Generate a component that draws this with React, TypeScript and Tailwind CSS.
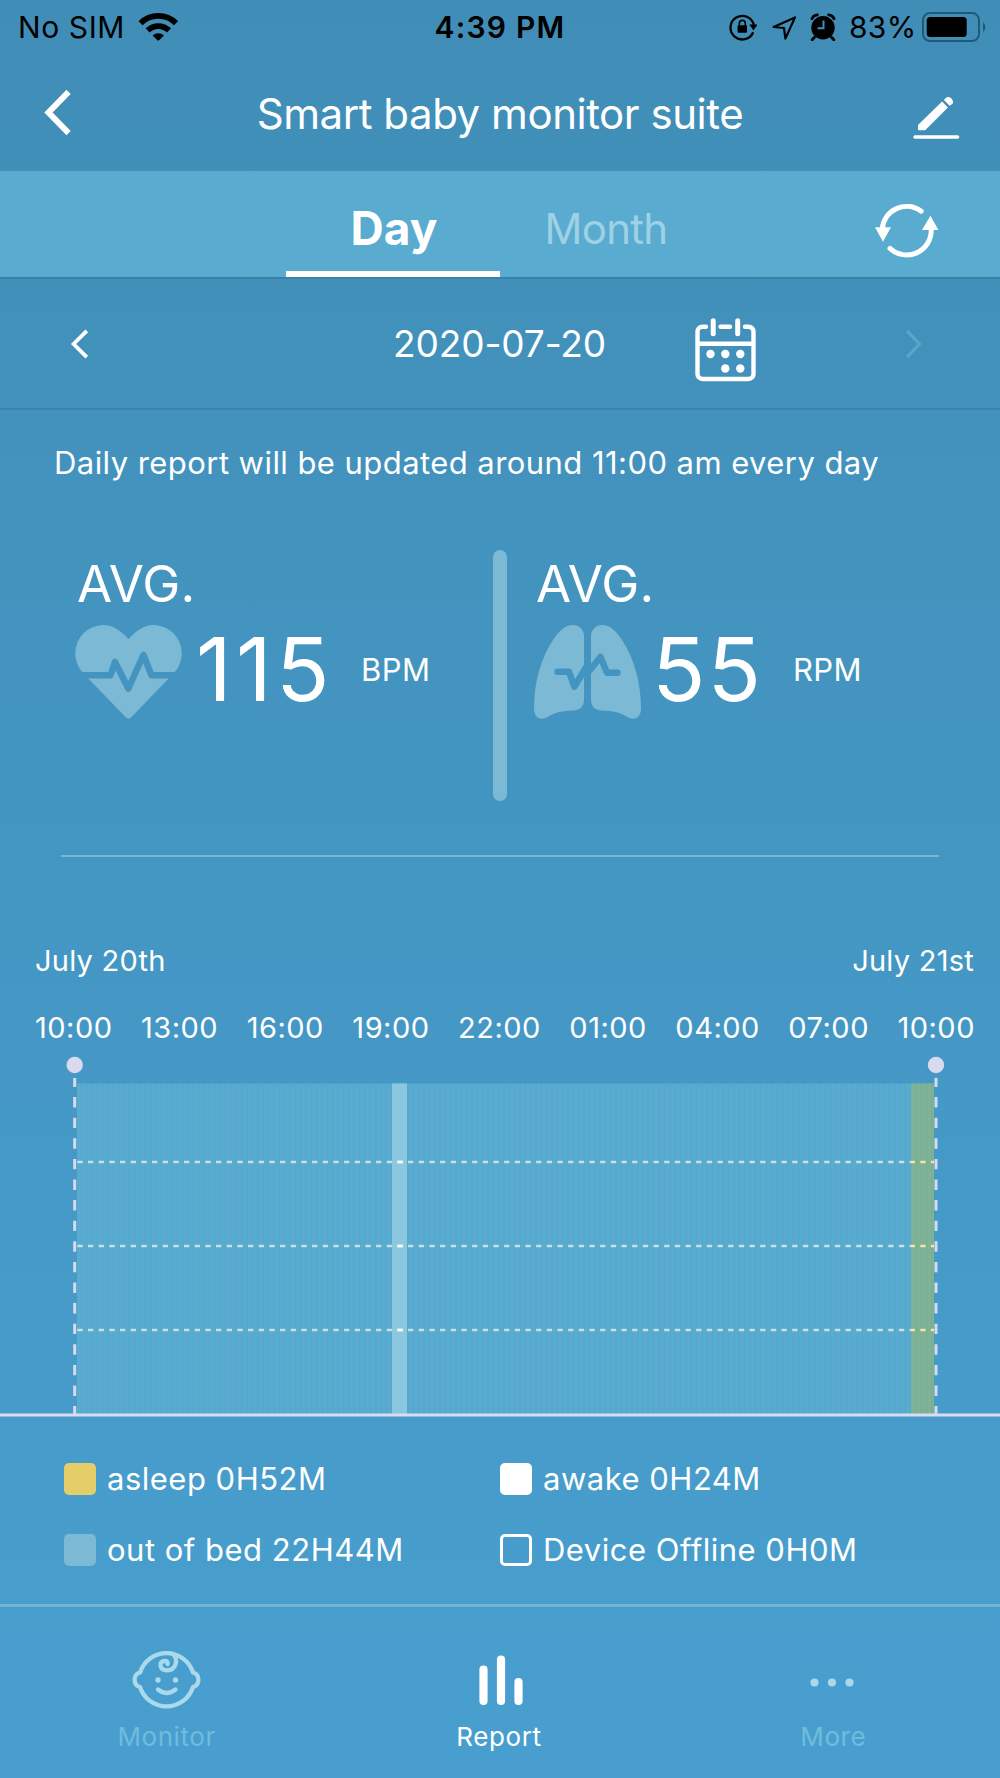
import { ReactNode } from "react";

const hours = ["10:00", "13:00", "16:00", "19:00", "22:00", "01:00", "04:00", "07:00", "10:00"];

function StatusBar() {
  return (
    <div className="relative flex h-[54px] items-center justify-between pr-[14px] pl-[18px] text-[30px] text-black">
      <div className="flex items-center">
        <span className="w-[106px] tracking-[0.6px] whitespace-nowrap">No SIM</span>
        <svg className="ml-[14px]" width="40" height="30" viewBox="0 0 40 30" fill="none" stroke="#000" strokeWidth="5.8">
          <path d="M2.6 11.2a25.2 25.2 0 0 1 35.4 0" />
          <path d="M9.6 18.4a15.4 15.4 0 0 1 21.4 0" />
          <path d="M14.6 23.4a8.4 8.4 0 0 1 11.4 0l-4.6 4.7q-1.1 1-2.2 0z" fill="#000" stroke="none" />
        </svg>
      </div>
      <span className="absolute inset-x-0 text-center font-semibold tracking-[1.2px]">4:39 PM</span>
      <div className="flex items-center">
        <svg width="28" height="28" viewBox="0 0 28 28" fill="none" stroke="#000" strokeWidth="2.3">
          <path d="M24.2 19.2A11.8 11.8 0 1 1 24.8 12" />
          <path d="M20.3 11.5h8.2l-4 6z" fill="#000" stroke="none" />
          <rect x="8.6" y="12.2" width="9.4" height="7.6" rx="1" fill="#000" stroke="none" />
          <path d="M10.3 13v-2.6a3 3 0 0 1 6 0V13" strokeWidth="1.6" />
        </svg>
        <svg className="ml-[14px]" width="26" height="26" viewBox="0 0 26 26" fill="none" stroke="#000" strokeWidth="2.2" strokeLinejoin="round">
          <path d="M2.6 13 24 3.4 14.4 24.6 13 14z" />
        </svg>
        <svg className="ml-[13px]" width="26" height="28" viewBox="0 0 26 28" fill="none">
          <circle cx="13" cy="14.7" r="11.7" fill="#000" />
          <path d="M2 5.6Q3.5 2 7.4 1.8M24 5.6Q22.5 2 18.6 1.8M4.5 24.2l-2.3 2.5M21.5 24.2l2.3 2.5" stroke="#000" strokeWidth="2.8" strokeLinecap="round" />
          <path d="M13.5 7.5v7.8h-6" stroke="#408eb7" strokeWidth="2" />
        </svg>
        <span className="ml-[13px] w-[67px] tracking-[0.3px] whitespace-nowrap">83%</span>
        <svg className="ml-[6px]" width="64" height="32" viewBox="0 0 64 32">
          <rect x="1" y="2" width="56" height="28" rx="7" fill="none" stroke="#215a78" strokeWidth="2" />
          <rect x="4.7" y="6" width="40" height="20" rx="3.5" />
          <path d="M61 11q2.5 2 2.5 5T61 21z" fill="#215a78" />
        </svg>
      </div>
    </div>
  );
}

function TitleBar() {
  return (
    <div className="flex h-[117px] items-center justify-between pr-[39px] pl-[43px]">
      <svg width="50" height="48" viewBox="0 0 50 48" fill="none" stroke="#fff" strokeWidth="6">
        <path d="M25.6 2.9 5.5 23.5l20.1 20.6" />
      </svg>
      <h1 className="mr-[4px] mt-[2px] text-[42px] tracking-[-0.46px] whitespace-nowrap">Smart baby monitor suite</h1>
      <svg className="mt-1" width="50" height="48" viewBox="0 0 50 48" fill="#fff">
        <path d="M7 34 31.1 10.6l5.8 5.8L14.2 39.2H8q-1 0-1-1z" />
        <path d="M32.900 8.900 35.3 6.400A5 5 0 0 1 41.800 12.500L38.7 14.700z" />
        <path d="M4 46h42.6" stroke="#fff" strokeWidth="3.4" strokeLinecap="round" />
      </svg>
    </div>
  );
}

function Tabs() {
  return (
    <div className="flex h-[108px] border-b-2 border-[#3980aa] bg-[#5aabd0]">
      <button className="ml-[286px] w-[214px] border-b-[6px] border-white pt-[14px] pl-[2px] text-[46px] leading-none font-bold">Day</button>
      <button className="w-[214px] pt-[10px] pr-[2px] text-[42px] leading-none tracking-[-0.7px] text-[#9ed1e6]">Month</button>
      <svg className="mt-[32px] ml-[161px]" width="64" height="56" viewBox="0 0 64 56" fill="none" stroke="#fff" strokeWidth="5" strokeLinecap="round">
        <path d="M7.2 26A24.5 24.5 0 0 1 46.2 8.2" />
        <path d="M15 45.4A24.5 24.5 0 0 0 56.2 27" />
        <path d="M0 24.3h16l-8 14.4zM47 27h16.4l-8-14.3z" fill="#fff" stroke="none" />
      </svg>
    </div>
  );
}

function DateBar() {
  return (
    <div className="flex h-[131px] items-center border-b-2 border-[#3a82ab] pr-[76px] pl-[70px]">
      <svg width="20" height="30" viewBox="0 0 20 30" fill="none" stroke="#fff" strokeWidth="3.8">
        <path d="M16.8 1.8 3.6 15l13.2 13.2" />
      </svg>
      <span className="ml-[303px] w-[229px] text-[37px] tracking-[-0.1px] whitespace-nowrap">2020-07-20</span>
      <svg className="mt-3 ml-[72px]" width="62" height="66" viewBox="0 0 62 66" fill="none" stroke="#fff" strokeWidth="4.4" strokeLinecap="round">
        <path d="M12 9.7H8.5a5 5 0 0 0-5 5V57a5 5 0 0 0 5 5h46a5 5 0 0 0 5-5V14.7a5 5 0 0 0-5-5H51M26.5 9.7H36M3.5 26.7h56" />
        <path d="M19.2 3.7v13M43.7 3.7v13" strokeWidth="5" />
        <g fill="#fff" stroke="none">
          <circle cx="16.5" cy="37" r="4.2" />
          <circle cx="31.3" cy="37" r="4.2" />
          <circle cx="46.3" cy="37" r="4.2" />
          <circle cx="31.3" cy="51.5" r="4.2" />
          <circle cx="46.3" cy="51.5" r="4.2" />
        </g>
      </svg>
      <svg className="ml-auto" width="20" height="30" viewBox="0 0 20 30" fill="none" stroke="#55a7cc" strokeWidth="3.2">
        <path d="M3 1.8 15.5 15 3 28.2" />
      </svg>
    </div>
  );
}

function HeartIcon() {
  return (
    <svg className="shrink-0" width="107" height="94" viewBox="0 0 107 94" fill="#7cb9d4">
      <path d="M53.5 14C46 6 38 0 28 0A28.5 28.5 0 0 0 8.5 48.5L51 92.5q2.5 2.3 5 0L98.5 48.5A28.5 28.5 0 0 0 79 0C69 0 61 6 53.5 14z" />
      <path d="M0 50.2h35.5L40 37l13.3 26.5L68.5 30l8 20.2H107" fill="none" stroke="#4394c0" strokeWidth="6.5" strokeLinejoin="round" />
    </svg>
  );
}

function LungsIcon() {
  return (
    <svg className="shrink-0" width="107" height="94" viewBox="0 0 107 94" fill="#7cb9d4">
      <path d="M39 0A11 11 0 0 1 50 11V74Q50 85 39 85.5C28 86 22 87 14.5 91.5C7 96 0 93.5 0 83C0 58 7 33 19 15C25 6 31 0 39 0z" />
      <path d="M68 0A11 11 0 0 0 57 11V74Q57 85 68 85.5C79 86 85 87 92.5 91.5C100 96 107 93.5 107 83C107 58 100 33 88 15C82 6 76 0 68 0z" />
      <path d="M23.5 46.7H35l5.3 15L52 42.5l3.5 3L66.5 32 73 47.7h10.5" fill="none" stroke="#4394c0" strokeWidth="6.5" strokeLinecap="round" strokeLinejoin="round" />
    </svg>
  );
}

interface StatProps {
  icon: ReactNode;
  value: string;
  unit: string;
  valueClass: string;
}

function Stat({ icon, value, unit, valueClass }: StatProps) {
  return (
    <div className="flex w-[418px] flex-col">
      <span className="pl-[2px] text-[51px] leading-[67px] tracking-[0.1px]">AVG.</span>
      <div className="mt-2 flex items-center">
        {icon}
        <span className={`-mt-[6px] text-[88px] leading-none whitespace-nowrap ${valueClass}`}>{value}</span>
        <span className="-mt-[5px] text-[31px] leading-none tracking-[0.4px]">{unit}</span>
      </div>
    </div>
  );
}

function Stats() {
  return (
    <div className="mt-[35px] flex h-[251px] pl-[75px]">
      <Stat icon={<HeartIcon />} value="115" unit="BPM" valueClass="w-[179px] pl-[14px] tracking-[4.2px]" />
      <div className="w-[14px] shrink-0 rounded-full bg-[#7cb9d4]" />
      <div className="w-[27px] shrink-0" />
      <Stat icon={<LungsIcon />} value="55" unit="RPM" valueClass="w-[152px] pl-[11px] tracking-[2px]" />
    </div>
  );
}

function SleepChart() {
  return (
    <svg className="block" width="1000" height="369" viewBox="0 0 1000 369">
      <defs>
        <pattern id="stripes" width="5.35" height="10" patternUnits="userSpaceOnUse">
          <rect width="2.2" height="10" fill="#3e9ac0" fillOpacity="0.12" />
        </pattern>
      </defs>
      <rect x="77" y="35.5" width="857" height="331" fill="#59abd0" />
      <rect x="911" y="35.5" width="23" height="331" fill="#80b393" />
      <rect x="77" y="35.5" width="857" height="331" fill="url(#stripes)" />
      <rect x="392" y="35.5" width="15" height="331" fill="#8bc7e0" />
      {[114, 198, 282].map((y) => (
        <g key={y} fill="none" strokeWidth="2.6" strokeDasharray="5.35 5.32">
          <path d={`M77.3 ${y}H911`} stroke="#c9dfe6" />
          <path d={`M397.4 ${y}h9`} stroke="#fff" />
          <path d={`M911 ${y}H934`} stroke="#f4e2ae" strokeDashoffset="1.4" />
        </g>
      ))}
      <path d="M0 367H1000" stroke="#dcdcf0" strokeWidth="3.2" />
      {[74.7, 936].map((x) => (
        <g key={x}>
          <circle cx={x} cy="17" r="8.2" fill="#dadaee" />
          <path d={`M${x} 30V367`} stroke="#dadaee" strokeWidth="3" strokeDasharray="10.4 10.2" strokeDashoffset="1.5" />
        </g>
      ))}
    </svg>
  );
}

function Legend() {
  return (
    <div className="mt-[27px] grid h-[142px] grid-cols-[436px_1fr] grid-rows-2 pl-[64px] text-[31px] tracking-[0.5px]">
      <div className="flex items-center gap-[11px]">
        <i className="-mt-px size-[32px] rounded-[5px] bg-[#e5cd69]" />
        <span>asleep 0H52M</span>
      </div>
      <div className="flex items-center gap-[11px]">
        <i className="-mt-px size-[32px] rounded-[5px] bg-white" />
        <span>awake 0H24M</span>
      </div>
      <div className="flex items-center gap-[11px]">
        <i className="-mt-px size-[32px] rounded-[5px] bg-[#7cb9d4]" />
        <span>out of bed 22H44M</span>
      </div>
      <div className="flex items-center gap-[11px]">
        <i className="-mt-px size-[32px] rounded-[5px] border-[3px] border-white" />
        <span>Device Offline 0H0M</span>
      </div>
    </div>
  );
}

function BottomNav() {
  return (
    <nav className="mt-[18px] grid h-[174px] grid-cols-3 border-t-[3px] border-[#74b4d3] text-[26px] leading-[36px] tracking-[0.6px]">
      <div className="flex flex-col items-center pt-[41px] text-[#71bbdc]">
        <svg width="70" height="64" viewBox="0 -1 70 64" fill="none" stroke="#a9d9eb" strokeWidth="4.3" strokeLinecap="round" strokeLinejoin="round">
          <path d="M8 23.5A27.8 27.8 0 0 1 61 23.5C68.2 25.500 68.2 36 61 38A27.800 27.800 0 0 1 8 38C.8 36 .8 25.500 8 23.5z" />
          <path d="M41 5C47 11 43.5 21.5 35 21.3C27 21 26.5 12 32.5 12Q36.5 12 35.5 15" />
          <circle cx="26" cy="31" r="2.7" fill="#a9d9eb" stroke="none" />
          <circle cx="43.5" cy="31" r="2.7" fill="#a9d9eb" stroke="none" />
          <path d="M26 40.5q8.7 7 17.5 0" />
        </svg>
        <span className="mt-[7px]">Monitor</span>
      </div>
      <div className="flex flex-col items-center pt-[41px]">
        <svg width="70" height="64" viewBox="0 0 70 64" stroke="#fff" strokeWidth="8.2" strokeLinecap="round">
          <path d="M18.5 21.500V53M36 11.500V53M53.500 34V53" />
        </svg>
        <span className="mt-[7px] mr-[2px]">Report</span>
      </div>
      <div className="flex flex-col items-center pt-[41px] text-[#71bbdc]">
        <svg width="70" height="64" viewBox="0 0 70 64" fill="#a9d9eb">
          <circle cx="16.5" cy="34.5" r="4.1" />
          <circle cx="34" cy="34.5" r="4.1" />
          <circle cx="51.5" cy="34.5" r="4.1" />
        </svg>
        <span className="mt-[7px]">More</span>
      </div>
    </nav>
  );
}

export default function App() {
  return (
    <div className="flex h-[1778px] w-[1000px] flex-col overflow-hidden bg-linear-to-b from-[#408eb7] to-[#489fcf] font-['Inter',sans-serif] text-white">
      <StatusBar />
      <TitleBar />
      <Tabs />
      <DateBar />
      <p className="pl-[54px] text-[31px] leading-[105px] tracking-[0.44px] whitespace-nowrap">
        Daily report will be updated around 11:00 am every day
      </p>
      <Stats />
      <div className="mx-[61px] mt-[54px] h-[2px] bg-[#76b7d5]" />
      <div className="mt-[84px] flex justify-between pr-[26px] pl-[35px] text-[29px] leading-[40px] tracking-[0.25px]">
        <span>July 20th</span>
        <span>July 21st</span>
      </div>
      <div className="mt-[27px] flex justify-between pr-[25px] pl-[35px] text-[29px] leading-[40px] tracking-[0.5px]">
        {hours.map((hour, i) => (
          <span key={i}>{hour}</span>
        ))}
      </div>
      <SleepChart />
      <Legend />
      <BottomNav />
    </div>
  );
}
